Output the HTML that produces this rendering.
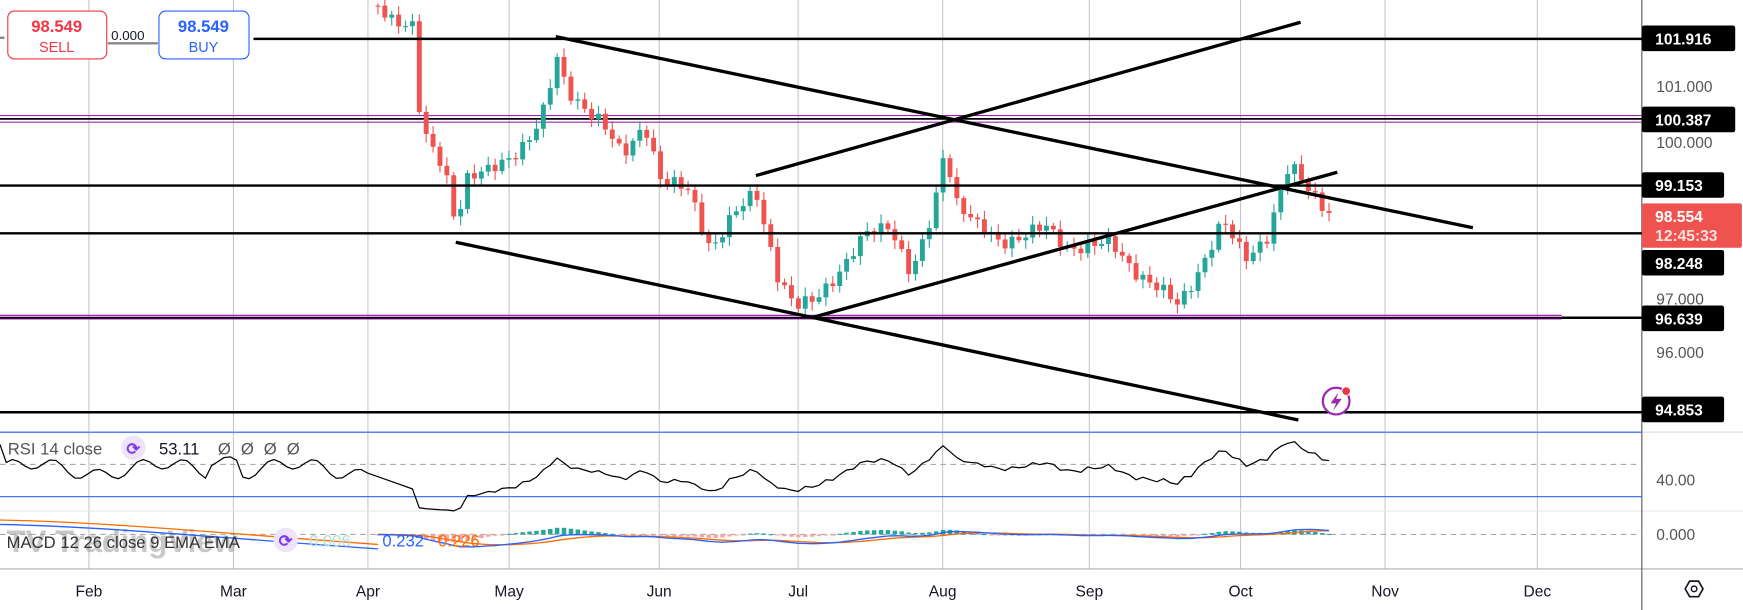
<!DOCTYPE html>
<html><head><meta charset="utf-8">
<style>
html,body{margin:0;padding:0;background:#fff;overflow:hidden}
svg{display:block}
text{font-family:"Liberation Sans",sans-serif}
</style></head>
<body>
<svg id="s" width="1743" height="610" viewBox="0 0 1568 549" preserveAspectRatio="none" xmlns="http://www.w3.org/2000/svg">
<rect width="1568" height="549" fill="#fff"/>
<g stroke="#c8c8cc" stroke-width="1">
<line x1="80" y1="0" x2="80" y2="512"/><line x1="210" y1="0" x2="210" y2="512"/><line x1="331" y1="0" x2="331" y2="512"/><line x1="458" y1="0" x2="458" y2="512"/><line x1="593" y1="0" x2="593" y2="512"/><line x1="718" y1="0" x2="718" y2="512"/><line x1="848" y1="0" x2="848" y2="512"/><line x1="980" y1="0" x2="980" y2="512"/><line x1="1116" y1="0" x2="1116" y2="512"/><line x1="1246" y1="0" x2="1246" y2="512"/><line x1="1383" y1="0" x2="1383" y2="512"/>
</g>
<g stroke="#e8e8ec"><line x1="0" y1="389" x2="1568" y2="389" stroke-width="1.5"/><line x1="0" y1="460" x2="1568" y2="460"/><line x1="0" y1="512" x2="1568" y2="512" stroke="#b0b0b4"/></g>
<line x1="1477" y1="0" x2="1477" y2="549" stroke="#555" stroke-width="1"/>
<line x1="0" y1="104" x2="1477" y2="104" stroke="#9c27b0" stroke-width="1"/>
<line x1="0" y1="107" x2="1477" y2="107" stroke="#000" stroke-width="1.5"/>
<line x1="0" y1="110" x2="1477" y2="110" stroke="#9c27b0" stroke-width="1"/>
<line x1="0" y1="284" x2="1405" y2="284" stroke="#9c27b0" stroke-width="1.5"/>
<line x1="0" y1="287" x2="1405" y2="287" stroke="#9c27b0" stroke-width="1"/>
<text x="6" y="497" fill="#9a9a9a" fill-opacity="0.55" font-size="28" font-weight="bold">TV TradingView</text>
<g id="candles"></g>
<g stroke="#000" stroke-width="2.2" fill="none">
<line x1="0" y1="34" x2="4" y2="34" stroke="#888"/><line x1="97" y1="39" x2="142" y2="39" stroke="#888"/>
<line x1="228" y1="35" x2="1477" y2="35"/>
<line x1="0" y1="167" x2="1477" y2="167"/>
<line x1="0" y1="210" x2="1477" y2="210"/>
<line x1="1405" y1="286" x2="1477" y2="286"/><line x1="0" y1="286" x2="1405" y2="286" stroke-width="1.5"/>
<line x1="0" y1="371" x2="1477" y2="371"/>
<line x1="500" y1="33" x2="1325" y2="205" stroke-width="3"/>
<line x1="410" y1="218" x2="1168" y2="378" stroke-width="3"/>
<line x1="680" y1="158" x2="1170" y2="20" stroke-width="3"/>
<line x1="730" y1="286" x2="1203" y2="155" stroke-width="3"/>
</g>
<rect x="7" y="10" width="89" height="43" rx="6" fill="#fff" stroke="#f23645"/>
<text x="51" y="29" fill="#f23645" font-size="15" text-anchor="middle" font-weight="bold">98.549</text>
<text x="51" y="47" fill="#f23645" font-size="13" text-anchor="middle">SELL</text>
<text x="115" y="36" fill="#131722" font-size="12" text-anchor="middle">0.000</text>
<rect x="143" y="10" width="81" height="43" rx="6" fill="#fff" stroke="#2962ff"/>
<text x="183" y="29" fill="#2962ff" font-size="15" text-anchor="middle" font-weight="bold">98.549</text>
<text x="183" y="47" fill="#2962ff" font-size="13" text-anchor="middle">BUY</text>
<line x1="0" y1="389" x2="1477" y2="389" stroke="#2962ff"/>
<line x1="0" y1="447" x2="1477" y2="447" stroke="#2962ff"/>
<line x1="0" y1="418" x2="1477" y2="418" stroke="#aaa" stroke-dasharray="5,4"/>
<line x1="0" y1="481" x2="1477" y2="481" stroke="#aaa" stroke-dasharray="5,4"/>
<g id="ind"></g>
<text x="7" y="409" fill="#555" font-size="15">RSI 14 close</text>
<circle cx="120" cy="403" r="11" fill="#ede3fb"/><text x="120" y="409" fill="#7e3bef" font-size="15" text-anchor="middle" font-weight="bold">⟳</text>
<text x="143" y="409" fill="#131722" font-size="15">53.11</text>
<text x="196" y="409" fill="#555" font-size="15" letter-spacing="9">ØØØØ</text>
<text x="6" y="493" fill="#333" font-size="15">MACD 12 26 close 9 EMA EMA</text>
<circle cx="257" cy="486" r="11" fill="#ede3fb"/><text x="257" y="492" fill="#7e3bef" font-size="15" text-anchor="middle" font-weight="bold">⟳</text>
<text x="278" y="492" fill="#b2dfdb" font-size="15">0.006</text>
<text x="344" y="492" fill="#2962ff" font-size="15">0.232</text>
<text x="394" y="492" fill="#ff6d00" font-size="15">0.226</text>
<circle cx="1202" cy="361" r="12" fill="#fff" stroke="#9c27b0" stroke-width="2"/>
<path d="M1204 353 L1197 363 L1202 363 L1199 370 L1207 359 L1202 359 Z" fill="#9c27b0"/>
<circle cx="1211" cy="352" r="4" fill="#f23645" stroke="#fff"/>
<g font-size="14" fill="#555">
<text x="1490" y="83">101.000</text>
<text x="1490" y="133">100.000</text>
<text x="1490" y="274">97.000</text>
<text x="1490" y="322">96.000</text>
<text x="1490" y="437">40.00</text>
<text x="1490" y="486">0.000</text>
</g>
<g font-size="14" font-weight="bold" fill="#fff">
<rect x="1477" y="23" width="84" height="23" rx="2" fill="#000"/><text x="1489" y="40">101.916</text>
<rect x="1477" y="96" width="84" height="23" rx="2" fill="#000"/><text x="1489" y="113">100.387</text>
<rect x="1477" y="155" width="74" height="23" rx="2" fill="#000"/><text x="1489" y="172">99.153</text>
<rect x="1477" y="183" width="90" height="40" rx="2" fill="#ef5350"/><text x="1489" y="200">98.554</text><text x="1489" y="217" fill="#fde0e0">12:45:33</text>
<rect x="1477" y="225" width="74" height="23" rx="2" fill="#000"/><text x="1489" y="242">98.248</text>
<rect x="1477" y="275" width="74" height="23" rx="2" fill="#000"/><text x="1489" y="292">96.639</text>
<rect x="1477" y="357" width="74" height="23" rx="2" fill="#000"/><text x="1489" y="374">94.853</text>
</g>
<g font-size="14" fill="#131722" text-anchor="middle">
<text x="80" y="537">Feb</text><text x="210" y="537">Mar</text><text x="331" y="537">Apr</text><text x="458" y="537">May</text><text x="593" y="537">Jun</text><text x="718" y="537">Jul</text><text x="848" y="537">Aug</text><text x="980" y="537">Sep</text><text x="1116" y="537">Oct</text><text x="1246" y="537">Nov</text><text x="1383" y="537">Dec</text>
</g>
<path d="M1516 530 L1520 523 L1528 523 L1532 530 L1528 537 L1520 537 Z" fill="none" stroke="#131722" stroke-width="1.5"/><circle cx="1524" cy="530" r="2.5" fill="none" stroke="#131722" stroke-width="1.3"/>
</svg>
<script>
(function(){
var NS="http://www.w3.org/2000/svg";
function el(p,t,a){var e=document.createElementNS(NS,t);for(var k in a)e.setAttribute(k,typeof a[k]=="number"?a[k].toFixed(2):a[k]);p.appendChild(e);return e;}
var K=[[340,5],[352,15],[372,25],[378,110],[385,130],[400,150],[410,200],[420,160],[440,155],[460,140],[480,120],[492,95],[500,50],[510,80],[520,90],[540,110],[560,140],[580,110],[595,165],[620,170],[640,225],[660,195],[680,170],[700,250],[715,278],[730,270],[760,240],[780,210],[800,200],[820,250],[840,190],[850,130],[860,180],[880,205],[900,218],[940,205],[960,222],[1000,220],[1020,242],[1060,275],[1080,240],[1100,200],[1120,232],[1140,212],[1160,150],[1180,172],[1200,195]];
function iy(x){for(var i=0;i<K.length-1;i++){if(x<=K[i+1][0]){var t=(x-K[i][0])/(K[i+1][0]-K[i][0]);return K[i][1]+t*(K[i+1][1]-K[i][1]);}}return K[K.length-1][1];}
var G=document.getElementById('candles');
var prev=iy(340),cl=[],xs=[];
for(var x=340,n=0;x<=1200;x+=6.2,n++){
 var c=iy(x)+Math.sin(n*2.3)*5+Math.sin(n*0.7)*3;var o=prev;
 var hi=Math.min(o,c)-2-Math.abs(Math.sin(n*1.7))*6, lo=Math.max(o,c)+2+Math.abs(Math.cos(n*1.3))*6;
 var col=c<o?"#26a69a":"#ef5350";var bt=Math.min(o,c),bh=Math.max(1,Math.abs(c-o));
 el(G,"line",{x1:x,y1:hi,x2:x,y2:lo,stroke:col,"stroke-width":1});
 el(G,"rect",{x:x-2.2,y:bt,width:4.4,height:bh,fill:col});
 prev=c;cl.push(-c);xs.push(x);}
var I=document.getElementById('ind');
var g=0,l=0,N=14,pts=[];
for(var i=1;i<cl.length;i++){var d=cl[i]-cl[i-1];var gg=d>0?d:0,ll=d<0?-d:0;
 if(i<=N){g+=gg/N;l+=ll/N;}else{g=(g*13+gg)/14;l=(l*13+ll)/14;}
 var r=l==0?100:100-100/(1+g/l);if(i>4)pts.push([xs[i],r]);}
var rp="M0 400";
for(var j=1;j<60;j++){var xx=j*5.6;rp+=" L"+xx.toFixed(1)+" "+(418-(Math.sin(j*0.9)*4+Math.sin(j*0.3)*4+(xx>190&&xx<215?8:0)-3)*1.4).toFixed(1);}
pts.forEach(function(q){rp+=" L"+q[0].toFixed(1)+" "+(418-(q[1]-50)*0.9).toFixed(1);});
el(I,"path",{d:rp,fill:"none",stroke:"#000","stroke-width":1.1});
function ema(a,n){var k=2/(n+1),e=a[0],r=[];a.forEach(function(v){e=v*k+e*(1-k);r.push(e);});return r;}
var e12=ema(cl,12),e26=ema(cl,26),m=e12.map(function(v,i){return v-e26[i]}),sg=ema(m,9);
var mp="",sp="";
for(var i=0;i<m.length;i++){var y1=481-m[i]*0.25,y2=481-sg[i]*0.25;mp+=(i?"L":"M")+xs[i].toFixed(1)+" "+y1.toFixed(1);sp+=(i?"L":"M")+xs[i].toFixed(1)+" "+y2.toFixed(1);
 var h=(m[i]-sg[i])*0.4;el(I,"rect",{x:xs[i]-2,y:Math.min(481,481-h),width:4,height:Math.max(1,Math.abs(h)),fill:(h>0?"#26a69a":"#f7a5a5")});}
el(I,"path",{d:sp,fill:"none",stroke:"#ff6d00","stroke-width":1.2});
el(I,"path",{d:mp,fill:"none",stroke:"#2962ff","stroke-width":1.2});
el(I,"path",{d:"M0 468 C100 470 200 480 340 490",fill:"none",stroke:"#ff6d00","stroke-width":1.2});
el(I,"path",{d:"M0 472 C100 474 220 486 340 494",fill:"none",stroke:"#2962ff","stroke-width":1.2});
})();
</script>
</body></html>
